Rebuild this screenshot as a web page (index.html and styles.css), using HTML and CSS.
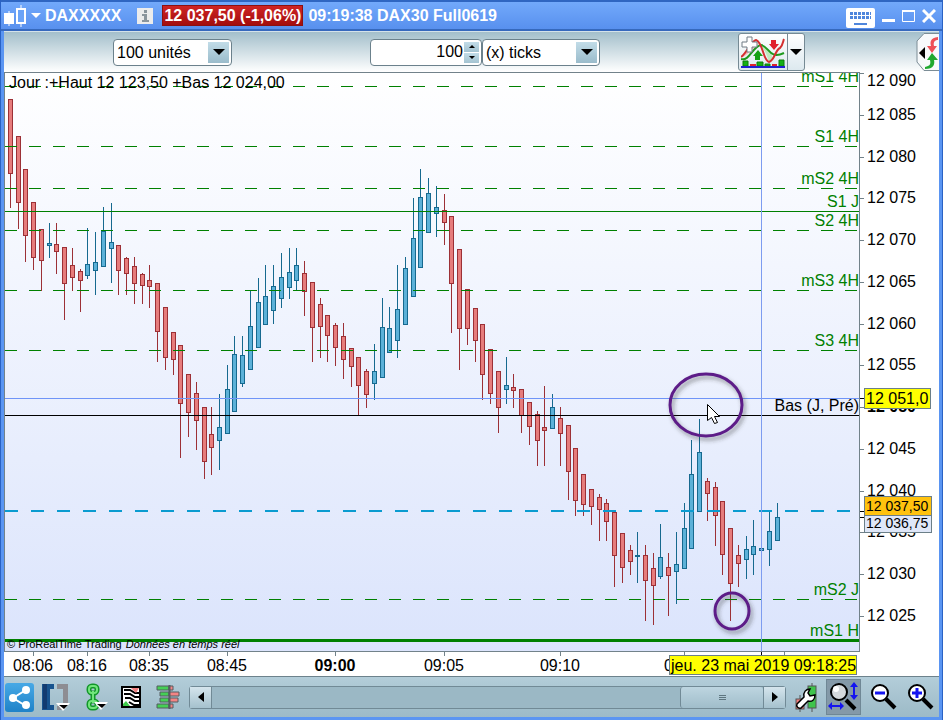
FILE: index.html
```html
<!DOCTYPE html>
<html lang="fr">
<head>
  <meta charset="UTF-8">
  <meta name="viewport" content="width=device-width, initial-scale=1.0">
  <title>DAX30 Full0619</title>
  <link rel="stylesheet" href="styles.css">
</head>
<body>
  <div class="window">
    <header class="titlebar">
      <svg class="logo" width="22" height="24" viewBox="0 0 22 24">
        <path d="M5 7v15M17 1v22" stroke="#fff"/>
        <rect x="0" y="9" width="10" height="11" fill="#fff"/>
        <rect x="13" y="5" width="8" height="14" fill="#6ba3f7" stroke="#fff" stroke-width="2"/>
      </svg>
      <svg class="logo-arrow" width="10" height="6" viewBox="0 0 10 6"><path d="M0 0h10L5 5z" fill="#fff"/></svg>
      <h1 class="name">DAXXXXX</h1>
      <button class="info" aria-label="Info">
        <svg width="16" height="16" viewBox="0 0 16 16">
          <rect width="16" height="16" fill="#ececec"/>
          <path d="M7 2h3v3H7zM5 6h5v6h2v2H5v-2h2V8H5z" fill="#8a959c"/>
        </svg>
      </button>
      <span class="quote">12 037,50 (-1,06%)</span>
      <span class="stamp">09:19:38 DAX30 Full0619</span>
      <div class="controls">
        <button class="plain keyboard" aria-label="Clavier">
          <svg width="29" height="20" viewBox="0 0 29 20">
            <rect width="29" height="20" rx="2" fill="#fff"/>
            <path d="M4 5.500h21M4 9.500h21" stroke="#4f86dc" stroke-width="3" stroke-dasharray="3 1"/>
            <path d="M4 7.500h21" stroke="#fff"/>
            <path d="M8 16h13" stroke="#4f86dc" stroke-width="2"/>
          </svg>
        </button>
        <button class="plain" aria-label="Réduire">
          <svg width="13" height="14" viewBox="0 0 13 14"><path d="M0 11.500h13" stroke="#fff" stroke-width="3"/></svg>
        </button>
        <button class="plain" aria-label="Agrandir">
          <svg width="13" height="14" viewBox="0 0 13 14"><path d="M.5 1.500h12v11H.5z" fill="none" stroke="#fff"/><path d="M0 2h13" stroke="#fff" stroke-width="2"/></svg>
        </button>
        <button class="plain" aria-label="Fermer">
          <svg width="14" height="14" viewBox="0 0 14 14"><path d="M1 1l12 12M13 1L1 13" stroke="#fff" stroke-width="3"/></svg>
        </button>
      </div>
    </header>

    <div class="toolbar">
      <div class="field units">
        <select aria-label="Unités"><option>100 unités</option></select>
        <span class="arrow"></span>
      </div>
      <div class="field count">
        <input type="text" value="100" aria-label="Nombre">
        <div class="spin">
          <button aria-label="Plus"><i class="up"></i></button>
          <button aria-label="Moins"><i class="down"></i></button>
        </div>
      </div>
      <div class="field ticks">
        <select aria-label="Type"><option>(x) ticks</option></select>
        <span class="arrow"></span>
      </div>
      <div class="indicators">
        <button aria-label="Indicateurs">
          <svg width="44" height="32" viewBox="0 0 44 32">
            <path d="M0 22C6 20 8 15 13 12L17 8C14 3 9 7 6 15z" fill="#f6b8b8"/>
            <path d="M17 8C24 12 26 20 28 26C34 20 30 18 26 13z" fill="#bfe8bf"/>
            <path d="M0 23C8 26 12 10 20 9C28 10 28 24 43 17" fill="none" stroke="#1e9a1e" stroke-width="2"/>
            <path d="M0 21C6 17 10 5 15 4C22 6 22 25 28 26C34 24 34 14 39 12C42 9 42 5 43 3" fill="none" stroke="#d32f2f" stroke-width="2"/>
            <path d="M6 1h5v5h5v5h-5v5H6v-5H1V6h5z" fill="#fff" stroke="#707d85"/>
            <path d="M30 4h5v4h3l-5 6-5-6h2z" fill="#e0202c"/>
            <path d="M14 24h5v-4h3l-5-6-5 6h2z" fill="#14a014"/>
            <path d="M2 25h5v5H2zM16 26h6v4h-6zM24 28h5v2h-5zM38 24h5v6h-5z" fill="#14b014" stroke="#0b7d0b"/>
            <path d="M9 28h6v2H9zM31 28h5v2h-5z" fill="#e0202c"/>
            <path d="M0 31h44" stroke="#2020d0" stroke-width="2"/>
          </svg>
        </button>
        <button class="more" aria-label="Plus d'indicateurs"><i class="down big"></i></button>
      </div>
      <button class="drawer" aria-label="Ordres">
        <svg width="23" height="38" viewBox="0 0 23 38">
          <path d="M23 .5H8L1 8V29L8 37.500H23" fill="#f7f9fb" stroke="#7c8d96"/>
          <path d="M9 14v12L3 20z" fill="#000"/>
          <path d="M22 4C14 5 14 9 15 13H11L16 20L21 13H18C17 9 19 7 22 7z" fill="#ee5058"/>
          <path d="M9 36C18 36 19 31 18 27H22L16 20L11 27H14C15 31 14 33 9 34z" fill="#20a830"/>
        </svg>
      </button>
    </div>

    <main class="chart">
      <svg class="plot" id="plot" role="img" aria-label="Graphique DAX 100 ticks"></svg>
      <svg class="prices" id="prices"></svg>
      <svg class="times" id="times"></svg>
    </main>

    <footer class="bottombar">
      <button class="share" aria-label="Partager">
        <svg width="29" height="29" viewBox="0 0 29 29">
          <path d="M21 7L8 15l13 8" fill="none" stroke="#fff" stroke-width="2"/>
          <circle cx="21" cy="7" r="4" fill="#fff"/><circle cx="8" cy="15" r="4" fill="#fff"/><circle cx="21" cy="22" r="4" fill="#fff"/>
        </svg>
      </button>
      <button class="tool w28" aria-label="Fenêtre">
        <svg width="28" height="28" viewBox="0 0 28 28">
          <path d="M0 1h12v5H8v16h4v5H0z" fill="#17538e"/><path d="M1 1h4v25H1z" fill="#123b70"/>
          <path d="M15 1h11v19h-5V6h-6zM15 23h5v4h-5z" fill="#8d8d92"/>
          <path d="M14 20h14l-7 8z" fill="#fff"/><path d="M17 22h9l-4 4z" fill="#000"/>
        </svg>
      </button>
      <button class="tool w30" aria-label="Lier">
        <svg width="30" height="28" viewBox="0 0 30 28">
          <g fill="none" stroke="#12962a" stroke-width="5"><rect x="11" y="3" width="8" height="7" rx="3"/><rect x="11" y="18" width="8" height="7" rx="3"/><path d="M15 8v12"/></g>
          <g fill="none" stroke="#72e67c" stroke-width="2"><rect x="11" y="3" width="8" height="7" rx="3"/><rect x="11" y="18" width="8" height="7" rx="3"/><path d="M15 8v12"/></g>
          <path d="M16 19h14l-7 8z" fill="#fff"/><path d="M19 21h9l-4 4z" fill="#000"/>
        </svg>
      </button>
      <button class="tool w30" aria-label="Rapport">
        <svg width="20" height="22" viewBox="0 0 20 22">
          <rect x="1" y="1" width="18" height="20" fill="#fff" stroke="#000" stroke-width="2"/>
          <path d="M3 4h6l5 3h4M3 8h6l5 3h4M4 12h5l5 3h4M8 16l5 3h5" fill="none" stroke="#000" stroke-width="2"/>
          <path d="M10 2h8l-3 5z" fill="#f08080"/><path d="M2 20v-2l3-3 4 5z" fill="#3ecb4b"/>
        </svg>
      </button>
      <button class="tool w27" aria-label="Carnet">
        <svg width="25" height="24" viewBox="0 0 25 24">
          <path d="M2 1h12v4H2zM5 7h9v4H5zM5 13h9v4H5zM2 19h12v4H2z" fill="#45cf55" stroke="#555d60"/>
          <path d="M14 1h4v4h-4zM14 7h10v4H14zM14 13h9v4h-9zM14 19h4v4h-4z" fill="#f48484" stroke="#555d60"/>
          <path d="M14.500 0v24" stroke="#555d60" stroke-width="2"/>
        </svg>
      </button>
      <div class="scroll">
        <button aria-label="Gauche"><i class="left"></i></button>
        <div class="track"><div class="thumb"></div></div>
        <button aria-label="Droite"><i class="right"></i></button>
      </div>
      <button class="tool w24" aria-label="Réglages">
        <svg width="24" height="30" viewBox="0 0 24 30">
          <path d="M6 13v17M18 1v29" stroke="#555"/>
          <rect x="2" y="17" width="8" height="10" fill="#f27b7b" stroke="#555"/><rect x="14" y="4" width="8" height="22" fill="#3fc44c" stroke="#555"/>
          <path d="M3 22l7-7c-1-5 2-8 6-8l-2 4 2 3 5-1c0 5-3 7-7 6l-7 7c-3 1-5-2-4-4z" fill="#fff" stroke="#000" stroke-width="1.500"/>
        </svg>
      </button>
      <button class="tool w35 active" aria-label="Zoom auto">
        <svg width="33" height="30" viewBox="0 0 33 30">
          <path d="M19 18l9 9" stroke="#000" stroke-width="4"/>
          <circle cx="12" cy="10" r="8" fill="#d5d9dc" stroke="#000" stroke-width="2"/><circle cx="9" cy="7" r="3" fill="#fff"/>
          <path d="M27 3v12M4 24h10" stroke="#1414f0" stroke-width="2"/>
          <path d="M27 0l4 5h-8zM27 18l4-5h-8zM1 24l4-4v8zM17 24l-4-4v8z" fill="#1414f0"/>
        </svg>
      </button>
      <button class="tool w29" aria-label="Zoom arrière">
        <svg width="26" height="26" viewBox="0 0 26 26">
          <path d="M15 15l9 9" stroke="#000" stroke-width="4"/><circle cx="9" cy="9" r="8" fill="#fff" stroke="#000" stroke-width="2"/>
          <path d="M4 9h10" stroke="#1414f0" stroke-width="3"/>
        </svg>
      </button>
      <button class="tool w29" aria-label="Zoom avant">
        <svg width="26" height="26" viewBox="0 0 26 26">
          <path d="M15 15l9 9" stroke="#000" stroke-width="4"/><circle cx="9" cy="9" r="8" fill="#fff" stroke="#000" stroke-width="2"/>
          <path d="M4 9h10M9 4v10" stroke="#1414f0" stroke-width="3"/>
        </svg>
      </button>
    </footer>
  </div>
  <script src="chart.js"></script>
</body>
</html>
```

FILE: styles.css
```css
* {
  box-sizing: border-box;
}

body {
  margin: 0;
  font-family: "Liberation Sans", Arial, sans-serif;
  font-size: 16px;
  color: #000;
}

button {
  margin: 0;
  padding: 0;
  border: 0;
  background: none;
}

svg {
  display: block;
}

.window {
  display: flex;
  flex-direction: column;
  min-height: 100vh;
  padding: 0 3px 3px;
  background: #5a95f2;
  border: 1px solid #2a62c4;
  border-top: 0;
}

/* title bar */

.titlebar {
  display: flex;
  align-items: center;
  height: 31px;
  margin: 0 -3px;
  padding: 0 6px 0 3px;
  border-top: 2px solid #2f66c2;
  border-bottom: 2px solid #3669bd;
  background: linear-gradient(#72a9fb, #5890ee);
  color: #fff;
  font-weight: bold;
}

.logo-arrow {
  margin: 0 4px 0 5px;
}

.name {
  margin: 0;
  font-size: 16px;
}

.info {
  margin: 0 9px 0 16px;
}

.quote {
  height: 21px;
  line-height: 19px;
  padding: 0 1px;
  background: linear-gradient(#cf2424, #a30d0d);
  border: 1px solid #8c1010;
  white-space: nowrap;
}

.stamp {
  margin-left: 5px;
  white-space: nowrap;
}

.controls {
  display: flex;
  align-items: center;
  gap: 7px;
  margin-left: auto;
}

.keyboard {
  padding-top: 4px;
}

/* toolbar */

.toolbar {
  display: flex;
  align-items: center;
  height: 41px;
  padding-left: 109px;
  border-top: 1px solid #d4e2ea;
  background: linear-gradient(#a3bfcb, #fff);
}

.field {
  display: flex;
  align-items: center;
  height: 27px;
  padding: 2px;
  background: #fff;
  border: 1px solid #6b818c;
  border-radius: 4px;
}

.field select,
.field input {
  flex: 1;
  min-width: 0;
  height: 21px;
  padding: 0 1px;
  border: 0;
  background: none;
  appearance: none;
  font: 16px "Liberation Sans", Arial, sans-serif;
  color: #000;
}

.field input {
  text-align: right;
}

.units {
  width: 119px;
}

.count {
  width: 112px;
  margin-left: 138px;
}

.ticks {
  width: 118px;
}

.arrow {
  display: flex;
  align-items: center;
  justify-content: center;
  width: 21px;
  height: 21px;
  background: linear-gradient(#c2dce8, #9abccb);
  pointer-events: none;
}

.arrow::after,
.down.big {
  content: "";
  border: 6px solid transparent;
  border-top: 6px solid #000;
  border-bottom: 0;
}

.spin {
  display: grid;
  gap: 1px;
}

.spin button {
  display: flex;
  align-items: center;
  justify-content: center;
  width: 15px;
  height: 10px;
  background: linear-gradient(#c2dce8, #a3c3d1);
}

.up {
  border: 3px solid transparent;
  border-bottom-color: #000;
  border-top: 0;
}

.down {
  border: 3px solid transparent;
  border-top-color: #000;
  border-bottom: 0;
}

.indicators {
  display: flex;
  width: 67px;
  height: 38px;
  margin-left: auto;
  background: linear-gradient(#fff, #dde9ef);
  border: 1px solid #768a94;
  border-radius: 3px;
}

.indicators button {
  display: flex;
  flex: 1;
  align-items: center;
  justify-content: center;
}

.indicators .more {
  flex: 0 0 17px;
  border-left: 1px solid #768a94;
}

.drawer {
  margin-left: 111px;
}

/* chart */

.chart {
  flex: 1;
  display: grid;
  grid-template-columns: 1fr 79px;
  grid-template-rows: minmax(580px, 1fr) 24px;
  background: #fff;
}

.plot {
  width: 100%;
  height: 100%;
  background: linear-gradient(#fff, #dbe4fc);
  border: 1px solid #72828a;
}

.prices {
  width: 79px;
  height: 100%;
}

.times {
  grid-column: 1 / 3;
  width: 100%;
  height: 24px;
}

.chart text {
  font-size: 16px;
}

.chart .small {
  font-size: 11px;
}

.chart .medium {
  font-size: 14px;
}

.chart .bold {
  font-weight: bold;
}

.chart .italic {
  font-style: italic;
}

/* bottom bar */

.bottombar {
  display: flex;
  align-items: center;
  gap: 8px;
  height: 41px;
  padding: 0 4px 0 1px;
  border-top: 1px solid #6d828c;
  background: linear-gradient(#b3cdd9, #9cbac7);
}

.share {
  background: linear-gradient(#47a9e6, #1f82c8);
  border-radius: 3px;
}

.tool {
  display: flex;
  align-items: center;
  justify-content: center;
  height: 36px;
}

.w24 { width: 24px; }
.w27 { width: 27px; }
.w28 { width: 28px; }
.w29 { width: 29px; }
.w30 { width: 30px; }
.w35 { width: 35px; }

.active {
  background: #8499a8;
  border: 1px solid #6f8795;
}

.scroll {
  flex: 1;
  display: flex;
  height: 23px;
  border: 1px solid #718a96;
  border-radius: 3px;
  background: #9bb8c5;
}

.scroll button {
  display: flex;
  align-items: center;
  justify-content: center;
  width: 21px;
  background: linear-gradient(#d5e5ed, #a5c1cd);
}

.left {
  border: 5px solid transparent;
  border-right: 6px solid #000;
  border-left: 0;
}

.right {
  border: 5px solid transparent;
  border-left: 6px solid #000;
  border-right: 0;
}

.track {
  flex: 1;
  display: flex;
  justify-content: flex-end;
  border-left: 1px solid #718a96;
  border-right: 1px solid #718a96;
}

.thumb {
  display: flex;
  align-items: center;
  justify-content: center;
  width: 83px;
  border-left: 1px solid #718a96;
  border-radius: 3px;
  background: linear-gradient(#bdd5e0, #a0bdca);
}

.thumb::after {
  content: "";
  width: 7px;
  height: 5px;
  background: repeating-linear-gradient(#5e7680 0 1px, transparent 1px 2px);
}
```

FILE: chart.js
```js
// x, high, body top, body bottom, low, direction (1 up, 0 down)
const candles = [
  [10,99,99,174,208,0], [18,136,136,203,229,0], [25,169,169,236,262,0], [33,202,202,258,270,0],
  [41,229,229,261,291,0], [49,223,243,246,258,1], [56,223,244,252,274,0], [64,247,247,284,320,0],
  [72,248,265,278,291,0], [80,269,271,281,312,0], [87,228,264,276,279,1], [95,232,262,271,295,1],
  [103,207,231,267,267,1], [111,203,242,249,283,1], [118,245,245,271,295,0], [126,257,258,274,295,0],
  [134,257,266,284,304,0], [142,273,274,286,304,0], [149,265,280,287,308,0], [157,283,283,332,362,0],
  [165,307,307,358,370,0], [173,332,332,360,375,0], [180,345,345,404,458,0], [188,374,374,413,437,0],
  [196,382,393,421,450,0], [204,407,407,462,479,0], [211,407,434,448,475,0], [219,394,427,441,470,1],
  [227,365,389,434,434,1], [234,336,354,412,412,1], [242,336,355,384,387,1], [250,291,326,370,370,1],
  [258,278,302,348,348,1], [265,265,296,325,325,1], [273,265,286,311,324,1], [281,253,277,299,308,1],
  [289,248,272,288,299,1], [296,248,265,281,290,1], [304,261,273,292,316,0], [312,282,282,328,362,0],
  [320,298,304,327,358,0], [327,315,315,336,362,0], [335,323,325,348,366,0], [343,323,336,360,379,0],
  [351,348,348,367,387,0], [358,357,357,386,415,0], [366,369,371,395,408,0], [374,344,371,384,400,1],
  [382,298,327,378,378,1], [389,307,328,353,353,1], [397,265,309,341,358,1], [405,257,268,325,325,1],
  [413,198,238,297,297,1], [420,169,197,268,268,1], [428,178,193,233,233,1], [436,186,207,214,237,1],
  [444,194,210,223,245,0], [451,216,216,284,333,0], [459,249,249,329,370,0], [467,289,289,329,345,0],
  [475,308,308,341,362,0], [482,324,324,375,400,0], [490,349,349,394,404,0], [498,371,371,408,433,0],
  [506,357,385,390,404,1], [513,374,387,391,408,0], [521,389,389,416,433,0], [529,402,402,427,445,0],
  [537,411,414,441,466,0], [544,386,427,431,466,0], [552,394,407,429,429,1], [560,407,418,434,466,0],
  [568,425,425,472,500,0], [575,448,448,501,516,0], [583,474,474,505,516,0], [591,489,489,507,525,0],
  [599,494,497,510,541,0], [606,499,503,522,541,0], [614,512,512,556,587,0], [622,533,533,568,583,0],
  [630,545,550,562,575,0], [637,532,555,557,583,1], [645,545,555,581,621,0], [653,553,568,586,625,0],
  [660,524,557,577,579,1], [668,553,567,576,616,0], [676,532,564,572,604,1], [684,503,528,569,569,1],
  [691,440,474,549,549,1], [699,419,452,512,512,1], [707,478,481,494,521,0], [715,482,487,516,546,0],
  [722,501,501,555,575,0], [730,528,528,584,621,0], [738,545,555,564,587,0], [746,536,549,560,579,1],
  [753,520,546,555,575,1], [761,524,548,551,590,1], [769,511,531,550,566,1], [777,503,517,541,541,1]
];

// y, label, dashed
const levels = [
  [86, 'mS1 4H', true], [146, 'S1 4H', true], [188, 'mS2 4H', true], [211, 'S1 J', false],
  [230, 'S2 4H', true], [290, 'mS3 4H', true], [350, 'S3 4H', true], [599, 'mS2 J', true]
];

const LEFT = 5;
const TOP = 73;
const green = '#008000';

const line = (y, color, width, dash) =>
  `<line x1="0" x2="100%" y1="${y}" y2="${y}" stroke="${color}" stroke-width="${width}" ${dash ? `stroke-dasharray="${dash}"` : ''}/>`;

const label = (y, text, color) =>
  `<text x="100%" y="${y}" text-anchor="end" fill="${color}">${text}</text>`;

function drawCandle([x, high, top, bottom, low, up]) {
  const edge = up ? '#16698f' : '#9c3036';
  const fill = up ? '#5cb1d8' : '#e67c7c';
  const cx = x - LEFT;
  let out = `<rect x="${cx}" y="${high - TOP}" width="1" height="${low - high}" fill="${edge}"/>`;
  out += `<rect x="${cx - 2}" y="${top - TOP}" width="5" height="${bottom - top}" fill="${edge}"/>`;
  if (bottom - top > 2) {
    out += `<rect x="${cx - 1}" y="${top - TOP + 1}" width="3" height="${bottom - top - 2}" fill="${fill}"/>`;
  }
  return out;
}

function drawPlot() {
  let out = `<defs><filter id="shadow" x="-20%" y="-20%" width="150%" height="150%">
    <feDropShadow dx="2" dy="3" stdDeviation="2" flood-color="#333" flood-opacity=".5"/></filter></defs>`;
  out += candles.map(drawCandle).join('');
  levels.forEach(([y, text, dashed]) => {
    out += line(y - TOP + .5, green, 1, dashed ? '12 12' : '');
    out += label(y - TOP - 4, text, green);
  });
  out += line(325.5, '#6f94f8', 1);
  out += line(342.5, '#000', 1);
  out += label(338, 'Bas (J, Pré)', '#000');
  out += line(438, '#0a9bd0', 2, '13 13');
  out += line(567.5, green, 3);
  out += label(563, 'mS1 H', green);
  out += '<line x1="756.5" x2="756.5" y1="0" y2="100%" stroke="#7d9cf0"/>';
  out += '<text x="4" y="15">Jour :+Haut 12 123,50 +Bas 12 024,00</text>';
  out += `<text class="small" x="2" y="575">© ProRealTime Trading
    <tspan class="italic" dx="1">Données en temps réel</tspan></text>`;
  out += `<g fill="none" stroke="#5d1c88" stroke-width="3" filter="url(#shadow)">
    <ellipse cx="701" cy="332" rx="36" ry="31"/><ellipse cx="727" cy="538" rx="17" ry="18"/></g>`;
  out += '<path d="M702.500 331.500v16l4-3 3 6 3-1-3-6h5z" fill="#fff" stroke="#000"/>';
  document.getElementById('plot').innerHTML = out;
}

function badge(y, width, height, fill, text, cls) {
  return `<rect x="4.500" y="${y + .5}" width="${width}" height="${height}" fill="${fill}" stroke="#6b7f88"/>
    <text class="${cls}" x="6" y="${y + height - 4}">${text}</text>`;
}

function drawPrices() {
  let out = '';
  for (let price = 12090; price >= 12025; price -= 5) {
    const y = Math.round((12090 - price) * 8.35) + 1;
    const bold = price === 12050 ? 'bold' : '';
    out += `<path d="M0 ${y + .5}h4" stroke="#72828a"/>`;
    out += `<text class="${bold}" x="7" y="${Math.max(y + 5, 14)}">12 0${String(price).slice(3)}</text>`;
  }
  out += '<path d="M0 326.500h4M0 439.500h4M0 445.500h4" stroke="#000"/>';
  out += badge(316, 66, 20, '#ffff00', '12 051,0', '');
  out += badge(443, 67, 17, '#dfe7f8', '12 036,75', 'medium');
  out += badge(424, 67, 19, '#ffc20e', '12 037,50', 'medium');
  document.getElementById('prices').innerHTML = out;
}

function drawTimes() {
  const times = [[33, '08:06'], [87, '08:16'], [149, '08:35'], [227, '08:45'],
    [335, '09:00'], [444, '09:05'], [560, '09:10'], [684, '09:15'], [784, '']];
  let out = '';
  times.forEach(([x, text]) => {
    out += `<path d="M${x - 3.5} 0v4" stroke="#72828a"/>`;
    out += `<text class="${text === '09:00' ? 'bold' : ''}" x="${x - 4}" y="19" text-anchor="middle">${text}</text>`;
  });
  out += '<path d="M757.500 0v4" stroke="#000"/>';
  out += '<rect x="665.500" y="3.500" width="187" height="19" fill="#ffff00" stroke="#6b7f88"/>';
  out += '<text x="667" y="19">jeu. 23 mai 2019 09:18:25</text>';
  document.getElementById('times').innerHTML = out;
}

drawPlot();
drawPrices();
drawTimes();
```
